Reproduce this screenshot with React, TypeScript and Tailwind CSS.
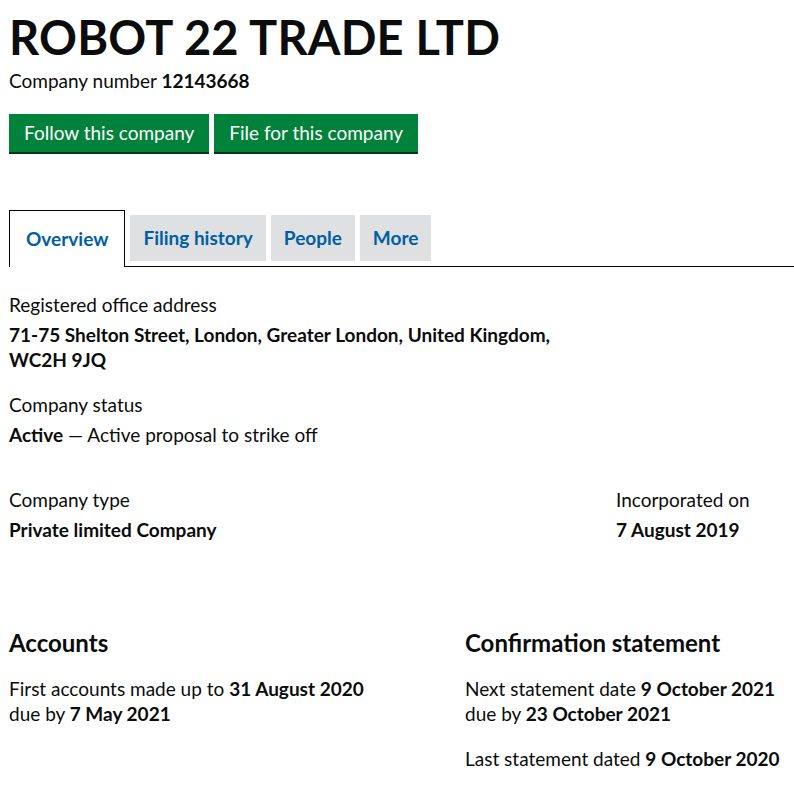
const font = { fontFamily: '"Lato", "Liberation Sans", sans-serif' };

function Tab({ label, active }: { label: string; active?: boolean }) {
  if (active) {
    return (
      <div className="-mb-px flex h-[57px] items-center border border-b-0 border-black bg-white px-[16px]">
        <span className="text-[19px] font-bold text-[#005ea5]">{label}</span>
      </div>
    );
  }
  return (
    <div className="mb-[5px] flex h-[46px] items-center bg-[#dee0e2] px-[13px]">
      <span className="text-[19px] font-bold text-[#005ea5]">{label}</span>
    </div>
  );
}

export default function App() {
  return (
    <div className="w-screen overflow-hidden bg-white text-[#0b0c0c]" style={font}>
      <div className="w-[912px] pl-[9px]">
        <h1 className="pt-[12px] text-[47px] font-bold leading-[50px] tracking-[0.2px]">ROBOT 22 TRADE LTD</h1>
        <p className="mt-[6px] text-[19px] leading-[25px]">
          Company number <strong>12143668</strong>
        </p>

        <div className="mt-[21px] flex gap-[5px]">
          <button className="h-[38px] bg-[#00823b] px-[15px] pt-[1px] text-[19px] text-white shadow-[0_2px_0_#003618]">
            Follow this company
          </button>
          <button className="h-[38px] bg-[#00823b] px-[15px] pt-[1px] text-[19px] text-white shadow-[0_2px_0_#003618]">
            File for this company
          </button>
        </div>

        <div className="mt-[58px] flex items-end gap-[5px] border-b border-black">
          <Tab label="Overview" active />
          <Tab label="Filing history" />
          <Tab label="People" />
          <Tab label="More" />
        </div>

        <dl className="mt-[25px] text-[19px] leading-[25px]">
          <dt>Registered office address</dt>
          <dd className="mt-[5px] w-[580px] font-bold">
            71-75 Shelton Street, London, Greater London, United Kingdom, WC2H 9JQ
          </dd>
          <dt className="mt-[20px]">Company status</dt>
          <dd className="mt-[5px]">
            <strong>Active</strong> — Active proposal to strike off
          </dd>
        </dl>

        <div className="mt-[40px] flex text-[19px] leading-[25px]">
          <dl className="w-[607px]">
            <dt>Company type</dt>
            <dd className="mt-[5px] font-bold">Private limited Company</dd>
          </dl>
          <dl>
            <dt>Incorporated on</dt>
            <dd className="mt-[5px] font-bold">7 August 2019</dd>
          </dl>
        </div>

        <div className="mt-[86px] flex text-[19px] leading-[25px]">
          <div className="w-[456px]">
            <h2 className="text-[24px] font-bold leading-[30px]">Accounts</h2>
            <p className="mt-[18px]">
              First accounts made up to <strong>31 August 2020</strong>
              <br />
              due by <strong>7 May 2021</strong>
            </p>
          </div>
          <div>
            <h2 className="text-[24px] font-bold leading-[30px]">Confirmation statement</h2>
            <p className="mt-[18px]">
              Next statement date <strong>9 October 2021</strong>
              <br />
              due by <strong>23 October 2021</strong>
            </p>
            <p className="mt-[20px]">
              Last statement dated <strong>9 October 2020</strong>
            </p>
          </div>
        </div>
      </div>
    </div>
  );
}
